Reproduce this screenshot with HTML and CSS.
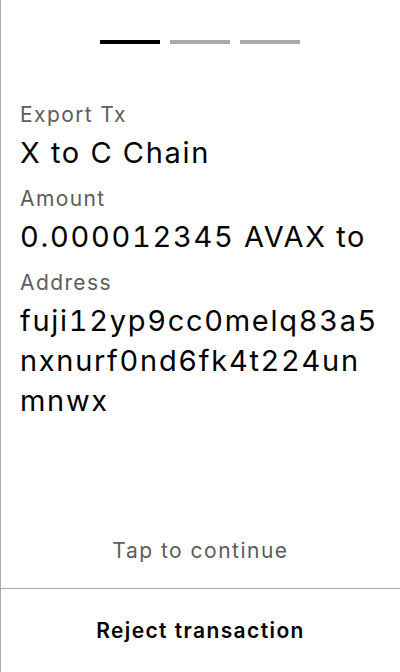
FILE: index.html
```html
<!DOCTYPE html>
<html>
<head>
<meta charset="utf-8">
<link rel="stylesheet" href="styles.css">
</head>
<body>
<div class="screen">
  <div class="progress">
    <span class="bar active"></span>
    <span class="bar"></span>
    <span class="bar"></span>
  </div>
  <div class="content">
    <div class="label">Export Tx</div>
    <div class="value">X to C Chain</div>
    <div class="label">Amount</div>
    <div class="value">0.000012345 AVAX to</div>
    <div class="label">Address</div>
    <div class="value address">fuji12yp9cc0melq83a5nxnurf0nd6fk4t224unmnwx</div>
  </div>
  <div class="tap">Tap to continue</div>
  <div class="footer">Reject transaction</div>
</div>
</body>
</html>
```
FILE: styles.css
```css
html, body {
  margin: 0;
  padding: 0;
  background: #fff;
}
body {
  font-family: Inter, "Noto Sans", sans-serif;
  color: #000;
}
.screen {
  box-sizing: border-box;
  width: 400px;
  height: 672px;
  border-left: 1px solid #aaaaaa;
  display: flex;
  flex-direction: column;
}
.progress {
  display: flex;
  justify-content: center;
  gap: 10px;
  padding-top: 40px;
  padding-right: 1px;
}
.bar {
  width: 60px;
  height: 4px;
  background: #aaaaaa;
}
.bar.active {
  background: #000;
}
.content {
  flex: 1;
  padding: 57px 8px 0 19px;
}
.label {
  font-size: 21px;
  line-height: 28px;
  letter-spacing: 1.4px;
  color: #5c5c5c;
  margin-bottom: 4px;
}
.value {
  font-size: 29px;
  line-height: 40px;
  letter-spacing: 1.7px;
  font-variant-numeric: tabular-nums;
  color: #000;
  margin-bottom: 12px;
}
.address {
  max-width: 360px;
  word-break: break-all;
}
.tap {
  font-size: 21px;
  line-height: 28px;
  letter-spacing: 1.5px;
  color: #5c5c5c;
  text-align: center;
  margin-bottom: 23px;
}
.footer {
  box-sizing: border-box;
  height: 84px;
  border-top: 1px solid #aaaaaa;
  display: flex;
  align-items: center;
  justify-content: center;
  font-size: 21px;
  font-weight: 600;
  line-height: 28px;
  letter-spacing: 1.4px;
}
```
